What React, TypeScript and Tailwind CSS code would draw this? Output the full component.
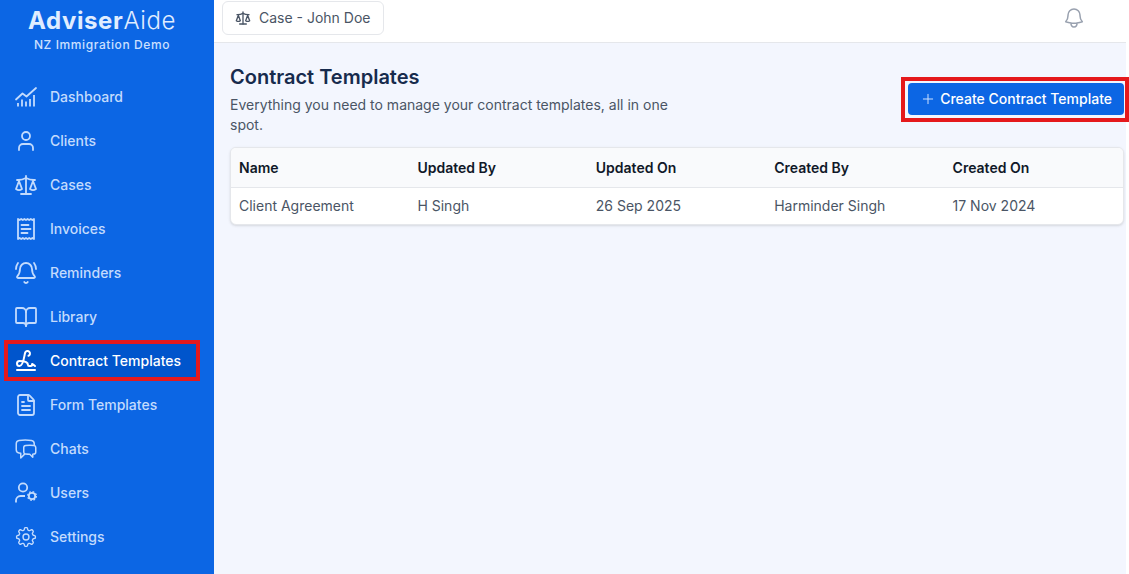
import type { ComponentType, SVGProps } from 'react'
import { BookOpen, FileText, BellRing, Plus, Scale, Signature, User } from 'lucide-react'
import { HiOutlineBell, HiOutlineChatBubbleLeftRight } from 'react-icons/hi2'
import { GoGear } from 'react-icons/go'

type IconType = ComponentType<SVGProps<SVGSVGElement>>

function TrendIcon(props: SVGProps<SVGSVGElement>) {
  return (
    <svg viewBox="0 0 24 24" fill="none" stroke="currentColor" strokeLinecap="round" strokeLinejoin="round" {...props}>
      <path d="M2 14.5 8.5 8.5l4 3L22 3" />
      <path d="M4 18v3.5M8 14.5v7M12 16.5v5M16 14v7.5M20 10v11.5" strokeLinecap="butt" />
    </svg>
  )
}

function ReceiptIcon(props: SVGProps<SVGSVGElement>) {
  return (
    <svg viewBox="0 0 24 24" fill="none" stroke="currentColor" strokeLinejoin="round" {...props}>
      <path d="M4 2l1.6 1 1.6-1 1.6 1 1.6-1L12 3l1.6-1 1.6 1 1.6-1 1.6 1L20 2v20l-1.6-1-1.6 1-1.6-1-1.6 1-1.6-1-1.6 1-1.6-1-1.6 1-1.6-1L4 22z" />
      <path d="M7.5 8h7M7.5 12h9M7.5 16h6" strokeLinecap="round" />
    </svg>
  )
}

function UserGearIcon(props: SVGProps<SVGSVGElement>) {
  return (
    <svg viewBox="0 0 24 24" fill="none" stroke="currentColor" {...props}>
      <circle cx="9" cy="6.5" r="4.2" />
      <path d="M2 21.5v-2A4.5 4.5 0 0 1 6.5 15H11" />
      <circle cx="18" cy="15" r="3.2" />
      <circle cx="18" cy="15" r="4.4" strokeWidth={1.2} strokeDasharray="1.728 1.728" />
    </svg>
  )
}

const navItems: { label: string; icon: IconType; active?: boolean }[] = [
  { label: 'Dashboard', icon: TrendIcon },
  { label: 'Clients', icon: User },
  { label: 'Cases', icon: Scale },
  { label: 'Invoices', icon: ReceiptIcon },
  { label: 'Reminders', icon: BellRing },
  { label: 'Library', icon: BookOpen },
  { label: 'Contract Templates', icon: Signature, active: true },
  { label: 'Form Templates', icon: FileText },
  { label: 'Chats', icon: HiOutlineChatBubbleLeftRight },
  { label: 'Users', icon: UserGearIcon },
  { label: 'Settings', icon: GoGear },
]

const columns = ['Name', 'Updated By', 'Updated On', 'Created By', 'Created On']
const rows = [['Client Agreement', 'H Singh', '26 Sep 2025', 'Harminder Singh', '17 Nov 2024']]

function NavIcon({ icon: Icon, active }: { icon: IconType; active?: boolean }) {
  // the gear is a filled glyph, a stroke would thicken it
  if (Icon === GoGear) return <Icon className="mx-px size-[22px] shrink-0" />
  const stroke = Icon === HiOutlineChatBubbleLeftRight ? 1.5 : 1.8
  return <Icon className="size-6 shrink-0" strokeWidth={active ? 2 : stroke} />
}

function Sidebar() {
  return (
    <aside className="w-[214px] shrink-0 bg-[#0c66e4] text-[#c3dbfd]">
      <div className="flex h-[76px] flex-col items-center pr-[10px] pt-[5px]">
        <div className="text-2xl tracking-wide text-[#e0edff]">
          <span className="font-bold">Adviser</span><span className="font-light">Aide</span>
        </div>
        <div className="text-xs font-medium tracking-wider text-[#cce0ff]">NZ Immigration Demo</div>
      </div>
      <nav className="flex flex-col gap-[3px] pl-1 pr-[14px]">
        {navItems.map(({ label, icon, active }) => (
          <a key={label} href="#" aria-current={active ? 'page' : undefined}
            className={`flex h-[41px] items-center gap-3 border-4 px-1.5 text-sm font-medium ${active ? 'border-[#e5191c] bg-[#0055cc] text-white' : 'border-transparent'}`}>
            <NavIcon icon={icon} active={active} />
            {label}
          </a>
        ))}
      </nav>
    </aside>
  )
}

export default function App() {
  return (
    <div className="flex min-h-screen overflow-hidden bg-white pr-[3px] font-['Inter',sans-serif] text-sm">
      <Sidebar />
      <div className="flex min-w-0 flex-1 flex-col bg-[#f3f6fe]">
        <header className="flex h-[43px] items-start justify-between border-b border-gray-200 bg-white pl-2 pr-10 pt-px">
          <button type="button" className="flex h-[34px] items-center gap-2 rounded-md border border-gray-200 px-3 text-gray-600">
            <Scale className="size-4" strokeWidth={2} />
            Case - John Doe
          </button>
          <button type="button" aria-label="Notifications" className="mt-[5px] text-gray-400">
            <HiOutlineBell className="size-6" />
          </button>
        </header>

        <main className="pl-4 pr-[2px] pt-5">
          <div className="flex items-start justify-between pb-3">
            <div>
              <h1 className="text-xl font-semibold leading-7 text-[#172b4d]">Contract Templates</h1>
              <p className="mt-1 max-w-md text-gray-600">Everything you need to manage your contract templates, all in one spot.</p>
            </div>
            <div className="relative mt-5 shrink-0">
              <button type="button" className="flex h-8 items-center gap-1 rounded-sm bg-[#0c66e4] px-3 font-medium text-white">
                <Plus className="size-4 text-[#cce0ff]" strokeWidth={1.5} />
                Create Contract Template
              </button>
              <span className="pointer-events-none absolute -bottom-[7px] -left-[7px] -right-[5px] -top-1.5 border-4 border-[#e5191c]" />
            </div>
          </div>

          <div className="overflow-hidden rounded-md border border-gray-200 bg-white shadow-sm">
            <table className="w-full table-fixed text-left">
              <thead className="bg-[#f9fafc] text-gray-900">
                <tr className="h-[39px] border-b border-gray-200">
                  {columns.map((c) => <th key={c} scope="col" className="px-2 pt-0.5 font-semibold">{c}</th>)}
                </tr>
              </thead>
              <tbody className="text-gray-600">
                {rows.map((row) => (
                  <tr key={row[0]} className="h-[37px]">
                    {row.map((cell, i) => <td key={columns[i]} className="px-2 pt-px">{cell}</td>)}
                  </tr>
                ))}
              </tbody>
            </table>
          </div>
        </main>
      </div>
    </div>
  )
}
